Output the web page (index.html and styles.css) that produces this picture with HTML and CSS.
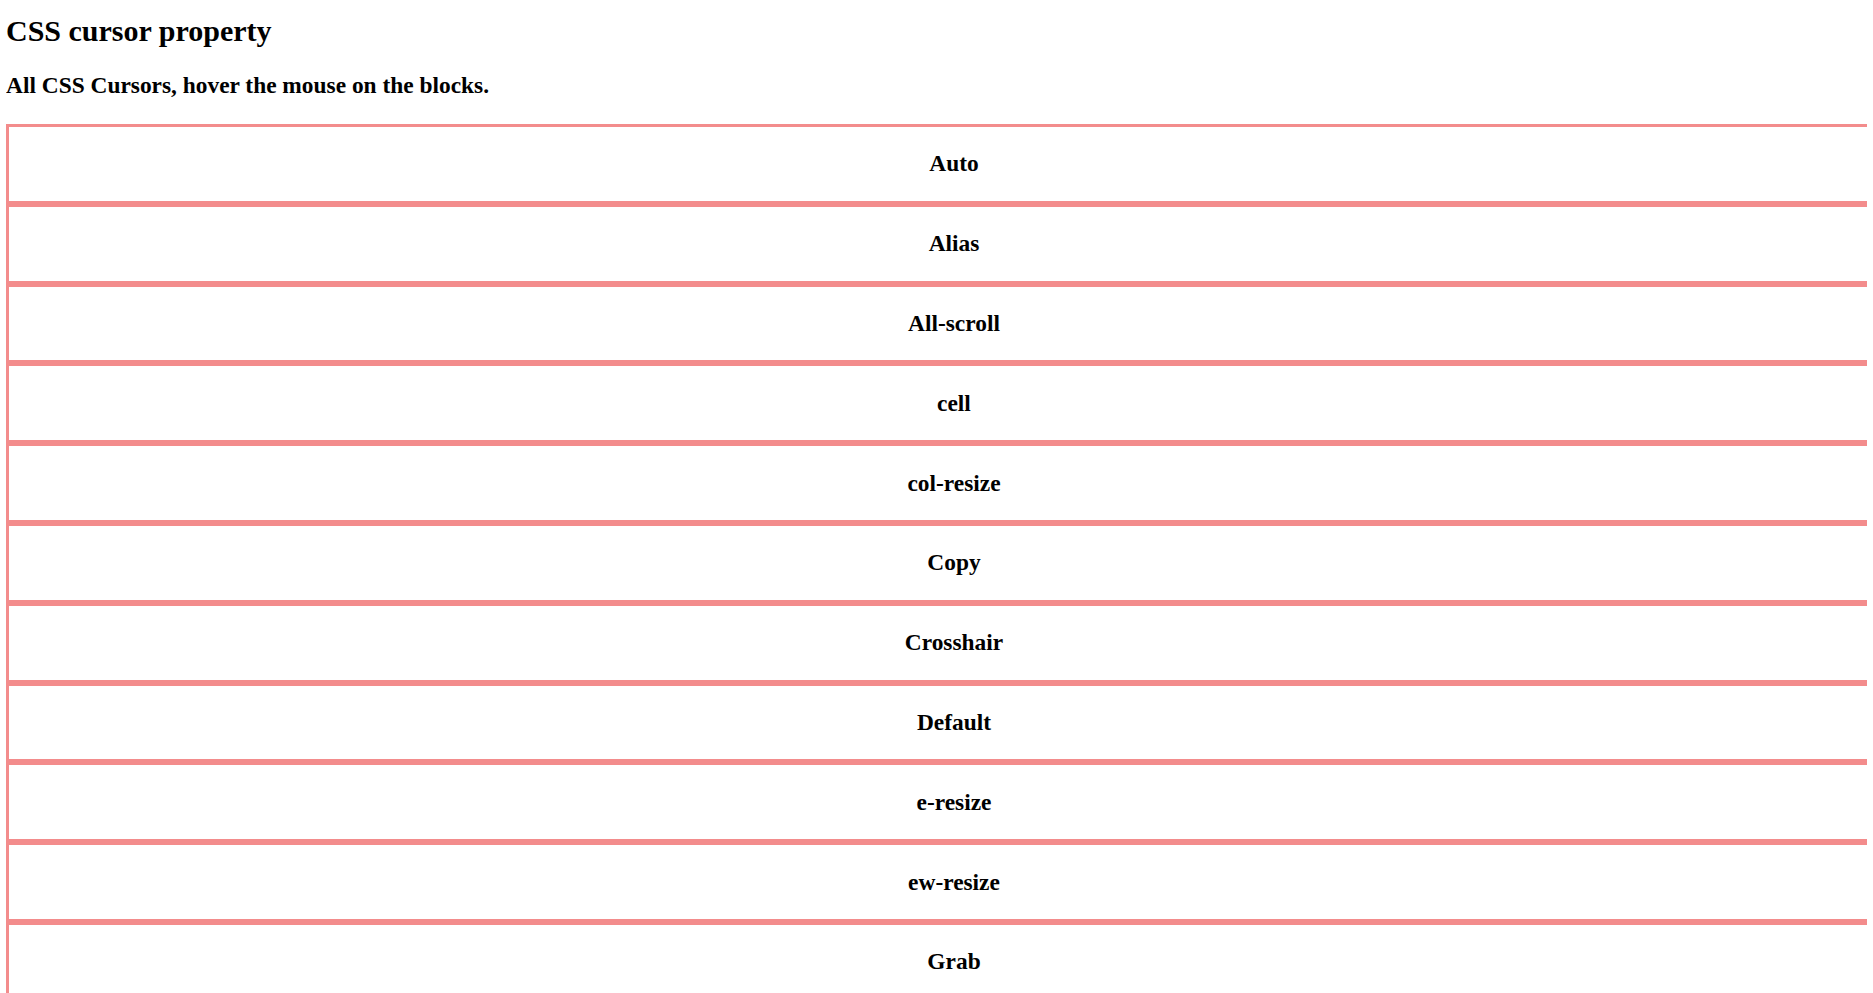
FILE: index.html
```html
<!DOCTYPE html>
<html lang="en">
<head>
<meta charset="utf-8">
<title>CSS cursor property</title>
<link rel="stylesheet" href="styles.css">
</head>
<body>
<h2 class="title">CSS cursor property</h2>
<h3 class="subtitle">All CSS Cursors, hover the mouse on the blocks.</h3>
<div class="list">
  <div class="block c-auto"><h3>Auto</h3></div>
  <div class="block c-alias"><h3>Alias</h3></div>
  <div class="block c-all-scroll"><h3>All-scroll</h3></div>
  <div class="block c-cell"><h3>cell</h3></div>
  <div class="block c-col-resize"><h3>col-resize</h3></div>
  <div class="block c-copy"><h3>Copy</h3></div>
  <div class="block c-crosshair"><h3>Crosshair</h3></div>
  <div class="block c-default"><h3>Default</h3></div>
  <div class="block c-e-resize"><h3>e-resize</h3></div>
  <div class="block c-ew-resize"><h3>ew-resize</h3></div>
  <div class="block c-grab"><h3>Grab</h3></div>
  <div class="block c-grabbing"><h3>Grabbing</h3></div>
  <div class="block c-help"><h3>Help</h3></div>
  <div class="block c-move"><h3>Move</h3></div>
  <div class="block c-n-resize"><h3>n-resize</h3></div>
  <div class="block c-ne-resize"><h3>ne-resize</h3></div>
  <div class="block c-nesw-resize"><h3>nesw-resize</h3></div>
  <div class="block c-ns-resize"><h3>ns-resize</h3></div>
  <div class="block c-nw-resize"><h3>nw-resize</h3></div>
  <div class="block c-nwse-resize"><h3>nwse-resize</h3></div>
  <div class="block c-no-drop"><h3>No-drop</h3></div>
  <div class="block c-none"><h3>None</h3></div>
  <div class="block c-not-allowed"><h3>Not-allowed</h3></div>
  <div class="block c-pointer"><h3>Pointer</h3></div>
  <div class="block c-progress"><h3>Progress</h3></div>
  <div class="block c-row-resize"><h3>row-resize</h3></div>
  <div class="block c-s-resize"><h3>s-resize</h3></div>
  <div class="block c-se-resize"><h3>se-resize</h3></div>
  <div class="block c-sw-resize"><h3>sw-resize</h3></div>
  <div class="block c-text"><h3>Text</h3></div>
  <div class="block c-vertical-text"><h3>Vertical-text</h3></div>
  <div class="block c-w-resize"><h3>w-resize</h3></div>
  <div class="block c-wait"><h3>Wait</h3></div>
  <div class="block c-zoom-in"><h3>zoom-in</h3></div>
  <div class="block c-zoom-out"><h3>zoom-out</h3></div>
</div>
</body>
</html>
```

FILE: styles.css
```css
html {
  overflow: hidden;
}

body {
  margin: 0 6px;
  font-family: "Liberation Serif", "Times New Roman", serif;
  font-size: 20px;
  color: #000;
  background: #fff;
}

.title {
  font-size: 30px;
  font-weight: bold;
  margin: 14px 0 23.5px;
}

.subtitle {
  font-size: 23.4px;
  font-weight: bold;
  margin: 23.4px 0 25.6px;
}

.list {
  width: 1896px;
}

.block {
  border: 3px solid #f38c8c;
  text-align: center;
}

.block h3 {
  font-size: 23.4px;
  font-weight: bold;
  margin: 23.4px 0;
}

.c-auto { cursor: auto; }
.c-alias { cursor: alias; }
.c-all-scroll { cursor: all-scroll; }
.c-cell { cursor: cell; }
.c-col-resize { cursor: col-resize; }
.c-copy { cursor: copy; }
.c-crosshair { cursor: crosshair; }
.c-default { cursor: default; }
.c-e-resize { cursor: e-resize; }
.c-ew-resize { cursor: ew-resize; }
.c-grab { cursor: grab; }
.c-grabbing { cursor: grabbing; }
.c-help { cursor: help; }
.c-move { cursor: move; }
.c-n-resize { cursor: n-resize; }
.c-ne-resize { cursor: ne-resize; }
.c-nesw-resize { cursor: nesw-resize; }
.c-ns-resize { cursor: ns-resize; }
.c-nw-resize { cursor: nw-resize; }
.c-nwse-resize { cursor: nwse-resize; }
.c-no-drop { cursor: no-drop; }
.c-none { cursor: none; }
.c-not-allowed { cursor: not-allowed; }
.c-pointer { cursor: pointer; }
.c-progress { cursor: progress; }
.c-row-resize { cursor: row-resize; }
.c-s-resize { cursor: s-resize; }
.c-se-resize { cursor: se-resize; }
.c-sw-resize { cursor: sw-resize; }
.c-text { cursor: text; }
.c-vertical-text { cursor: vertical-text; }
.c-w-resize { cursor: w-resize; }
.c-wait { cursor: wait; }
.c-zoom-in { cursor: zoom-in; }
.c-zoom-out { cursor: zoom-out; }
```
